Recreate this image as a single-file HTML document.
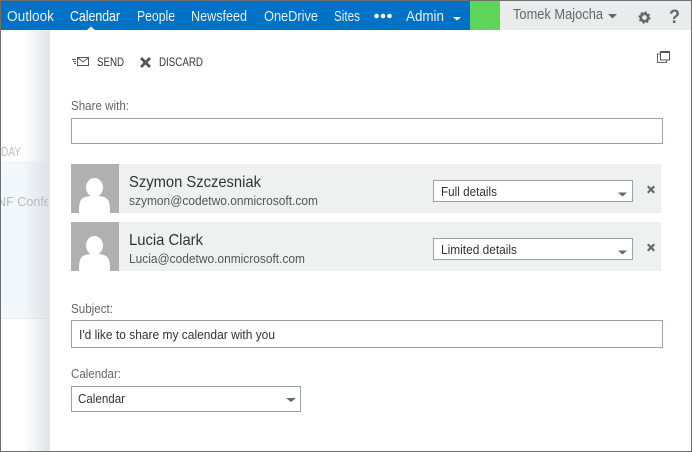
<!DOCTYPE html>
<html><head><meta charset="utf-8"><title>Share calendar</title>
<style>
html,body{margin:0;padding:0;background:#fff}
body{width:692px;height:452px;overflow:hidden;position:relative;font-family:"Liberation Sans",sans-serif}
.a{position:absolute;box-sizing:border-box}
.box{background:#fff;border:1px solid #98a3a6}
.row{background:#eff1f1;left:71px;width:590px;height:49px}
svg{position:absolute;left:0;top:0}
</style></head><body>
<div class="a" style="left:0;top:161px;width:49px;height:158px;background:#f3f8fd;border-bottom:1px solid #e8eaec"></div>
<div class="a" style="left:22px;top:30px;width:27px;height:422px;background:linear-gradient(90deg,rgba(205,207,210,0),rgba(205,207,210,.55))"></div>
<div class="a" style="left:49px;top:30px;width:642px;height:422px;background:#fff;border-left:1px solid #e4e5e6"></div>
<div class="a" style="left:0;top:1px;width:470px;height:29px;background:#0072c6"></div>
<div class="a" style="left:470px;top:1px;width:30px;height:29px;background:#5ed45a"></div>
<div class="a" style="left:500px;top:1px;width:191px;height:29px;background:#eaebed"></div>
<div class="a box" style="left:71px;top:118px;width:592px;height:26px"></div>
<div class="a row" style="top:164px"></div>
<div class="a row" style="top:222px"></div>
<div class="a box" style="left:433px;top:180px;width:200px;height:22px"></div>
<div class="a box" style="left:433px;top:238px;width:200px;height:22px"></div>
<div class="a box" style="left:71px;top:320px;width:592px;height:28px"></div>
<div class="a box" style="left:71px;top:386px;width:230px;height:26px"></div>
<svg width="692" height="452" viewBox="0 0 692 452" font-family="Liberation Sans, sans-serif">
<defs><clipPath id="c"><rect x="0" y="190" width="48" height="30"/></clipPath></defs>
<g fill="#fff" font-size="14.500">
<text x="7" y="21" textLength="47" lengthAdjust="spacingAndGlyphs" fill="#e6f1fa">Outlook</text>
<text x="70" y="21" textLength="50" lengthAdjust="spacingAndGlyphs">Calendar</text>
<text x="137" y="21" textLength="38" lengthAdjust="spacingAndGlyphs" fill="#e6f1fa">People</text>
<text x="191" y="21" textLength="56" lengthAdjust="spacingAndGlyphs" fill="#e6f1fa">Newsfeed</text>
<text x="264" y="21" textLength="54" lengthAdjust="spacingAndGlyphs" fill="#e6f1fa">OneDrive</text>
<text x="334" y="21" textLength="26" lengthAdjust="spacingAndGlyphs" fill="#e6f1fa">Sites</text>
<text x="406" y="21" textLength="38" lengthAdjust="spacingAndGlyphs" fill="#e6f1fa">Admin</text>
<circle cx="376.500" cy="16" r="2.300"/><circle cx="383" cy="16" r="2.300"/><circle cx="389.500" cy="16" r="2.300"/>
<path d="M453 17h8l-4 3.500z"/>
<path d="M87 30l4-3.500 4 3.500z"/>
</g>
<text x="513" y="19" font-size="14.500" fill="#666" textLength="90" lengthAdjust="spacingAndGlyphs">Tomek Majocha</text>
<path d="M608 14h9l-4.500 4.500z" fill="#666"/>
<circle cx="644.500" cy="17.500" r="3.700" fill="none" stroke="#666" stroke-width="2.600"/>
<circle cx="644.500" cy="17.500" r="5.200" fill="none" stroke="#666" stroke-width="1.800" stroke-dasharray="2 2.080"/>
<text x="669" y="23" font-size="19" font-weight="bold" fill="#666" textLength="11" lengthAdjust="spacingAndGlyphs">?</text>
<g fill="none" stroke="#5f6368">
<path d="M660.500 51.500h9v8.500h-9zM660.500 52.500h9" stroke="#555"/>
<path d="M660 62.500h-2.500v-8.500h3"/>
<path d="M657.500 62.500h9v-2.500"/>
</g>
<g fill="none" stroke="#555">
<path d="M77.500 57.500h11v8h-11zM77.500 57.500l5.500 4.500 5.500-4.500"/>
<path d="M72 59.500h4M73 61.500h3M74 63.500h2" stroke-width="1"/>
</g>
<path d="M140 59l2-2 3.500 3.500 3.500-3.500 2 2-3.500 3.500 3.500 3.500-2 2-3.500-3.500-3.500 3.500-2-2 3.500-3.500z" fill="#555"/>
<g font-size="12" fill="#333">
<text x="97" y="66" textLength="27" lengthAdjust="spacingAndGlyphs">SEND</text>
<text x="159" y="66" textLength="44" lengthAdjust="spacingAndGlyphs">DISCARD</text>
</g>
<g font-size="13" fill="#666">
<text x="71" y="110" textLength="58" lengthAdjust="spacingAndGlyphs">Share with:</text>
<text x="71" y="313" textLength="42" lengthAdjust="spacingAndGlyphs">Subject:</text>
<text x="71" y="378" textLength="50" lengthAdjust="spacingAndGlyphs">Calendar:</text>
</g>
<g fill="#bdbdbd" font-size="13">
<text x="1" y="156" textLength="20" lengthAdjust="spacingAndGlyphs">DAY</text>
<g clip-path="url(#c)"><text x="-3" y="206" textLength="58" lengthAdjust="spacingAndGlyphs" fill="#b4bac0">NF Confer</text></g>
</g>
<g fill="#b0b0b0">
<rect x="71" y="164" width="48" height="49"/>
<rect x="71" y="222" width="48" height="49"/>
</g>
<g fill="#fff">
<ellipse cx="94.500" cy="187.500" rx="8.500" ry="9.500"/><path d="M79 213c0-8 .5-13 4-15 3-1.500 5-2 11.500-2s8.500.5 11.500 2c3.500 2 4 7 4 15z"/>
<ellipse cx="94.500" cy="245.500" rx="8.500" ry="9.500"/><path d="M79 271c0-8 .5-13 4-15 3-1.500 5-2 11.500-2s8.500.5 11.500 2c3.500 2 4 7 4 15z"/>
</g>
<g font-size="16" fill="#333">
<text x="129" y="187" textLength="132" lengthAdjust="spacingAndGlyphs">Szymon Szczesniak</text>
<text x="129" y="245" textLength="74" lengthAdjust="spacingAndGlyphs">Lucia Clark</text>
</g>
<g font-size="13" fill="#555">
<text x="129" y="205" textLength="189" lengthAdjust="spacingAndGlyphs">szymon@codetwo.onmicrosoft.com</text>
<text x="129" y="263" textLength="176" lengthAdjust="spacingAndGlyphs">Lucia@codetwo.onmicrosoft.com</text>
</g>
<g font-size="13" fill="#333">
<text x="441" y="196" textLength="56" lengthAdjust="spacingAndGlyphs">Full details</text>
<text x="441" y="254" textLength="76" lengthAdjust="spacingAndGlyphs">Limited details</text>
<text x="79" y="339" textLength="196" lengthAdjust="spacingAndGlyphs">I'd like to share my calendar with you</text>
<text x="78" y="403" textLength="47" lengthAdjust="spacingAndGlyphs">Calendar</text>
</g>
<g fill="#666">
<path d="M618 192.500h9l-4.500 4z"/><path d="M618 250.500h9l-4.500 4z"/><path d="M286 398h10l-5 4z"/>
<path d="M647 187l1.500-1.500 2.500 2.500 2.500-2.500 1.500 1.500-2.500 2.500 2.500 2.500-1.500 1.500-2.500-2.500-2.500 2.500-1.500-1.500 2.500-2.500z"/>
<path transform="translate(0 58)" d="M647 187l1.500-1.500 2.500 2.500 2.500-2.500 1.500 1.500-2.500 2.500 2.500 2.500-1.500 1.500-2.500-2.500-2.500 2.500-1.500-1.500 2.500-2.500z"/>
</g>
</svg>
<div class="a" style="left:0;top:0;width:692px;height:1px;background:#6e6e6e"></div>
<div class="a" style="left:0;top:0;width:1px;height:452px;background:#6e6e6e"></div>
<div class="a" style="left:691px;top:0;width:1px;height:452px;background:#6e6e6e"></div>
<div class="a" style="left:0;top:451px;width:692px;height:1px;background:#6e6e6e"></div>
</body></html>
